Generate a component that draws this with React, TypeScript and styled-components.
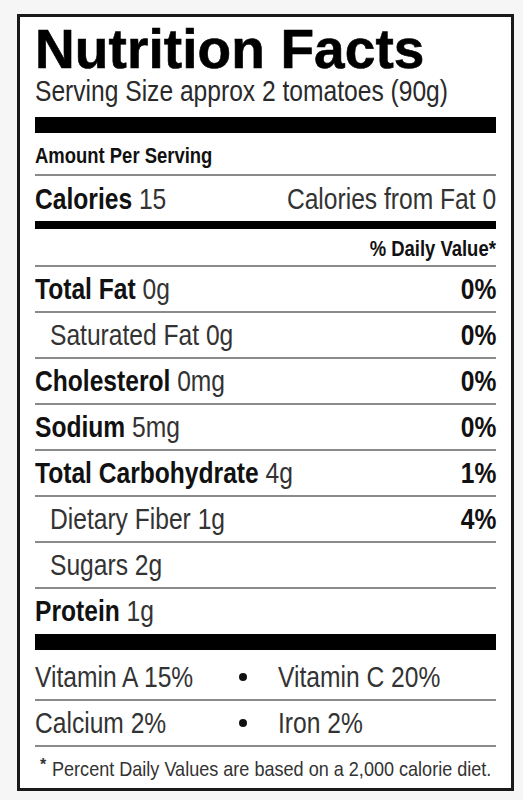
import styled, { createGlobalStyle } from "styled-components";

const GlobalStyle = createGlobalStyle`
  html, body {
    margin: 0;
    padding: 0;
    background: #f6f6f6;
  }
  body {
    font-family: "Liberation Sans", Arial, sans-serif;
    color: #222;
  }
`;

type Nutrient = {
  name: string;
  amount: string;
  dv?: string;
  sub?: boolean;
};

const nutrients: Nutrient[] = [
  { name: "Total Fat", amount: "0g", dv: "0%" },
  { name: "Saturated Fat", amount: "0g", dv: "0%", sub: true },
  { name: "Cholesterol", amount: "0mg", dv: "0%" },
  { name: "Sodium", amount: "5mg", dv: "0%" },
  { name: "Total Carbohydrate", amount: "4g", dv: "1%" },
  { name: "Dietary Fiber", amount: "1g", dv: "4%", sub: true },
  { name: "Sugars", amount: "2g", sub: true },
  { name: "Protein", amount: "1g" },
];

const vitamins = [
  ["Vitamin A 15%", "Vitamin C 20%"],
  ["Calcium 2%", "Iron 2%"],
];

export default function App() {
  return (
    <>
      <GlobalStyle />
      <Label>
        <Title>Nutrition Facts</Title>
        <Serving>
          <Narrow>Serving Size approx 2 tomatoes (90g)</Narrow>
        </Serving>
        <Bar $h={16} $mt={11} />
        <SmallHead>
          <Narrow>Amount Per Serving</Narrow>
        </SmallHead>
        <CaloriesRow>
          <Narrow>
            <B>Calories</B> 15
          </Narrow>
          <Narrow $right>Calories from Fat 0</Narrow>
        </CaloriesRow>
        <Bar $h={8} />
        <DvHead>
          <Narrow $right>% Daily Value*</Narrow>
        </DvHead>
        {nutrients.map((n, i) => (
          <Row key={n.name} $sub={n.sub} $last={i === nutrients.length - 1}>
            <Narrow>
              {n.sub ? n.name : <B>{n.name}</B>} {n.amount}
            </Narrow>
            {n.dv && (
              <Narrow $right>
                <B>{n.dv}</B>
              </Narrow>
            )}
          </Row>
        ))}
        <Bar $h={16} />
        {vitamins.map(([a, b], i) => (
          <VitRow key={a} $first={i === 0}>
            <Narrow>{a}</Narrow>
            <Dot />
            <VitRight>
              <Narrow>{b}</Narrow>
            </VitRight>
          </VitRow>
        ))}
        <Footnote>
          <Star>*</Star>
          <Narrow $scale={0.86}>
            Percent Daily Values are based on a 2,000 calorie diet.
          </Narrow>
        </Footnote>
      </Label>
    </>
  );
}

// the label face is a condensed grotesque; no narrow font is installed,
// so the text is squeezed horizontally instead
const Narrow = styled.span<{ $right?: boolean; $scale?: number }>`
  display: inline-block;
  white-space: nowrap;
  transform: scaleX(${(p) => p.$scale ?? 0.82});
  transform-origin: ${(p) => (p.$right ? "right" : "left")} center;
`;

const Label = styled.section`
  box-sizing: border-box;
  width: 497px;
  height: 777px;
  margin: 14px 0 0 17px;
  padding: 5px 15px 0;
  border: 3px solid #1a1a1a;
  background: #fff;
  overflow: hidden;
`;

const Title = styled.h1`
  margin: 0;
  font-weight: 700;
  font-size: 55px;
  line-height: 54px;
  height: 54px;
  letter-spacing: 0.1px;
  color: #000;
  -webkit-text-stroke: 0.6px #000;
`;

const Serving = styled.div`
  font-size: 30px;
  line-height: 30px;
  height: 30px;
  color: #2a2a2a;
`;

const Bar = styled.div<{ $h: number; $mt?: number }>`
  height: ${(p) => p.$h}px;
  margin-top: ${(p) => p.$mt ?? 0}px;
  background: #000;
`;

const B = styled.b`
  font-weight: 700;
  color: #111;
`;

const SmallHead = styled.div`
  box-sizing: border-box;
  height: 43px;
  padding-top: 4px;
  line-height: 37px;
  font-size: 22.5px;
  font-weight: 700;
  color: #111;
  border-bottom: 2px solid #8a8a8a;
`;

const CaloriesRow = styled.div`
  display: flex;
  justify-content: space-between;
  height: 45px;
  line-height: 45px;
  font-size: 30px;
  color: #333;
`;

const DvHead = styled.div`
  box-sizing: border-box;
  height: 38px;
  padding-top: 3px;
  line-height: 33px;
  text-align: right;
  font-size: 22.5px;
  font-weight: 700;
  color: #111;
  border-bottom: 2px solid #8a8a8a;
`;

const Row = styled.div<{ $sub?: boolean; $last?: boolean }>`
  box-sizing: border-box;
  display: flex;
  justify-content: space-between;
  height: ${(p) => (p.$last ? 45 : 46)}px;
  line-height: 44px;
  padding-left: ${(p) => (p.$sub ? 15 : 0)}px;
  font-size: 30px;
  color: #333;
  border-bottom: ${(p) => (p.$last ? "none" : "2px solid #8a8a8a")};
`;

const VitRow = styled.div<{ $first?: boolean }>`
  box-sizing: border-box;
  display: grid;
  grid-template-columns: 200px 16px 1fr;
  align-items: center;
  height: ${(p) => (p.$first ? 51 : 46)}px;
  padding-top: ${(p) => (p.$first ? 5 : 0)}px;
  line-height: 44px;
  font-size: 30px;
  color: #333;
  border-bottom: 2px solid #8a8a8a;
`;

const Dot = styled.span`
  justify-self: center;
  width: 8px;
  height: 8px;
  border-radius: 50%;
  background: #111;
`;

const VitRight = styled.span`
  padding-left: 27px;
`;

const Footnote = styled.div`
  box-sizing: border-box;
  height: 41px;
  padding-top: 2px;
  line-height: 39px;
  font-size: 21px;
  color: #333;
  white-space: nowrap;
`;

const Star = styled.span`
  display: inline-block;
  width: 17px;
  padding-left: 5px;
  box-sizing: border-box;
  font-size: 16px;
  font-weight: 700;
  vertical-align: 6px;
  line-height: 1;
`;
